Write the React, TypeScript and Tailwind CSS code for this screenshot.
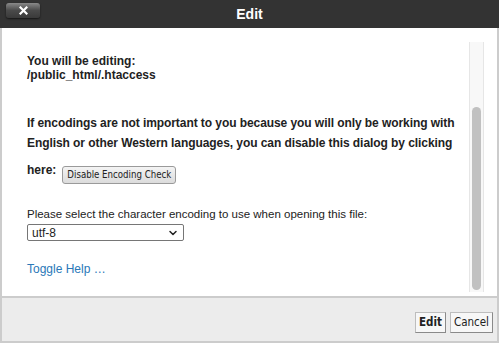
import { ChevronDown } from 'lucide-react'

const sans = { fontFamily: '"Liberation Sans", Arial, sans-serif' }
const cond = { fontFamily: '"DejaVu Sans Condensed", "DejaVu Sans", Verdana, sans-serif', fontStretch: 'condensed' }

export default function App() {
  return (
    <div className="flex h-[343px] w-[499px] flex-col bg-white" style={sans}>
      {/* title bar */}
      <div className="relative flex h-[28px] shrink-0 items-center justify-center bg-[#333333]">
        <button className="absolute left-[6px] top-[3px] flex h-[15px] w-[34px] items-center justify-center rounded-[3px] bg-gradient-to-b from-[#8a8a8a] via-[#4a4a4a] to-[#3a3a3a] shadow-[0_1px_2px_rgba(0,0,0,0.6)]">
          <svg width="9" height="9" viewBox="0 0 9 9">
            <path d="M1.5 1.5 L7.5 7.5 M7.5 1.5 L1.5 7.5" stroke="white" strokeWidth="2.2" strokeLinecap="square" />
          </svg>
        </button>
        <span className="text-[14px] font-bold text-white">Edit</span>
      </div>

      {/* body */}
      <div className="flex min-h-0 flex-1 border-x-2 border-[#cccccc]">
        <div className="flex-1 pl-[25px] pr-2 pt-[26px] text-[12px] text-[#222]">
          <p className="font-bold leading-[14px]">
            You will be editing:
            <br />
            /public_html/.htaccess
          </p>
          <p className="mt-[31px] font-bold leading-[20px] tracking-[-0.07px]">
            If encodings are not important to you because you will only be working with English or other Western
            languages, you can disable this dialog by clicking
          </p>
          <div className="mt-[10px] flex items-start gap-[6px] font-bold">
            <span className="leading-[14px]">here:</span>
            <button
              className="mt-[3px] h-[18px] rounded-[3px] border border-[#9a9a9a] bg-gradient-to-b from-[#f4f4f4] to-[#dcdcdc] px-[4px] text-[9.6px] font-normal text-[#222]"
              style={cond}
            >
              Disable Encoding Check
            </button>
          </div>
          <p className="mt-[23px] text-[11.5px] leading-[14px]">
            Please select the character encoding to use when opening this file:
          </p>
          <div className="mt-[3px] flex h-[17px] w-[157px] items-center justify-between rounded-[2px] border border-[#767676] bg-white pl-[4px] pr-[4px]">
            <span className="text-[12px]">utf-8</span>
            <ChevronDown size={12} strokeWidth={3} className="text-[#222]" />
          </div>
          <div className="mt-[19px] text-[12px] text-[#2a78b8]">Toggle Help …</div>
        </div>
        {/* scrollbar */}
        <div className="mr-[13px] mt-[14px] mb-[4px] flex w-[15px] flex-col border-x border-[#e6e6e6] bg-[#f8f8f8] px-[2px] pt-[65px] pb-[2px]">
          <div className="flex-1 rounded-full bg-[#c1c1c1]" />
        </div>
      </div>

      {/* footer */}
      <div className="flex h-[47px] shrink-0 items-center justify-end gap-[4px] border-x-2 border-b-2 border-t-2 border-[#cccccc] bg-[#ececec] pr-[4px] pt-[6px]">
        <button
          className="h-[21px] border border-[#bdbdbd] border-b-[#8a8a8a] border-r-[#8a8a8a] bg-[#f7f7f7] px-[3px] text-[11.5px] font-bold text-[#222]"
          style={cond}
        >
          Edit
        </button>
        <button
          className="h-[21px] border border-[#bdbdbd] border-b-[#8a8a8a] border-r-[#8a8a8a] bg-[#f7f7f7] px-[3px] text-[11.5px] text-[#222]"
          style={cond}
        >
          Cancel
        </button>
      </div>
    </div>
  )
}
